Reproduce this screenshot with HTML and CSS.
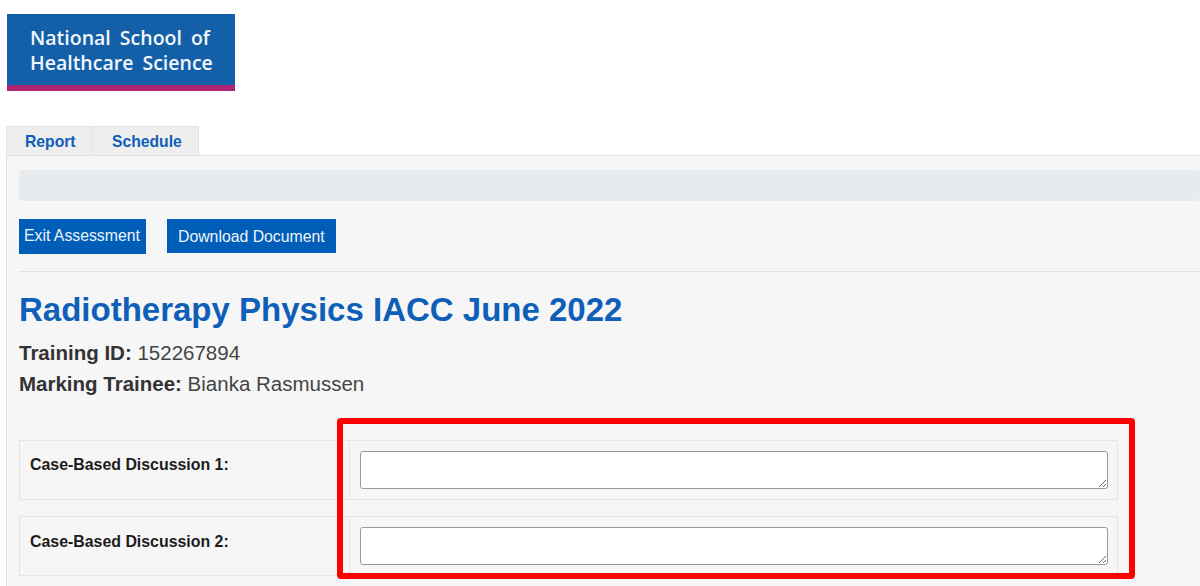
FILE: index.html
```html
<!DOCTYPE html>
<html lang="en">
<head>
<meta charset="utf-8">
<title>Radiotherapy Physics IACC June 2022</title>
<link rel="stylesheet" href="styles.css">
</head>
<body>
<header class="masthead">
  <div class="logo">National School of<br>Healthcare Science</div>
</header>
<nav class="tabs">
  <a class="tab">Report</a>
  <a class="tab tab-second">Schedule</a>
</nav>
<main class="panel">
  <div class="notice"></div>
  <div class="actions">
    <a class="btn btn-exit">Exit Assessment</a>
    <a class="btn btn-download">Download Document</a>
  </div>
  <hr class="rule">
  <h1 class="title">Radiotherapy Physics IACC June 2022</h1>
  <p class="meta"><b>Training ID:</b> 152267894</p>
  <p class="meta"><b>Marking Trainee:</b> Bianka Rasmussen</p>
  <section class="rows">
    <div class="row">
      <div class="row-label">Case-Based Discussion 1:</div>
      <div class="row-field"><textarea class="answer"></textarea></div>
    </div>
    <div class="row">
      <div class="row-label">Case-Based Discussion 2:</div>
      <div class="row-field"><textarea class="answer"></textarea></div>
    </div>
  </section>
</main>
<div class="highlight"></div>
</body>
</html>
```
FILE: styles.css
```css
html, body { margin: 0; padding: 0; height: 586px; overflow: hidden; background: #fff; }
body { font-family: "Liberation Sans", Arial, sans-serif; color: #333; position: relative; }

.masthead { padding: 14px 0 0 7px; height: 126px; box-sizing: border-box; }
.logo {
  width: 228px; height: 77px; box-sizing: border-box;
  background: #1460a8; border-bottom: 6px solid #ae2573;
  color: #f2f6fb; font-family: "Open Sans", sans-serif; font-weight: 600;
  font-size: 19.5px; word-spacing: 4px; line-height: 25px; padding: 11px 0 0 23px; white-space: nowrap;
}

.tabs { display: flex; margin-left: 6px; height: 29px; }
.tab {
  display: block; box-sizing: border-box; height: 29px; width: 87px; padding: 6px 0 0 18px;
  background: #eee; border: 1px solid #e2e2e2; border-bottom: 0;
  color: #0e5fb8; font-size: 15.7px; font-weight: bold;
}
.tab-second { border-left: 0; width: 106px; padding-left: 19px; }

.panel {
  margin-left: 6px; height: 431px; box-sizing: border-box;
  background: #f6f6f6; border-top: 1px solid #e2e2e2; border-left: 1px solid #e2e2e2;
  padding: 14px 0 0 12px;
}
.notice { height: 31px; background: #e8ebee; border-radius: 4px; }
.actions { display: flex; align-items: flex-start; gap: 21px; margin-top: 18px; }
.btn {
  display: block; box-sizing: border-box; background: #005eb8; color: #eef4fb;
  font-size: 15.8px; white-space: nowrap;
}
.btn-exit { width: 127px; height: 35px; padding: 8px 0 0 5px; }
.btn-download { width: 169px; height: 34px; padding: 9px 0 0 11px; }
.rule { border: 0; border-top: 1px solid #e2e2e2; margin: 17px 0 0; }
.title {
  margin: 18px 0 0 0; font-size: 33px; line-height: 40px; font-weight: bold; color: #0e5fb8;
}
.meta { margin: 0; font-size: 20.5px; line-height: 31px; color: #444; }
.meta b { color: #333; }
.title + .meta { margin-top: 7px; }

.rows { margin: 41px 82px 0 0; display: flex; flex-direction: column; gap: 16px; }
.row {
  display: flex; height: 60px; box-sizing: border-box; border: 1px solid #e6e6e6;
}
.row-label {
  width: 330px; flex: none; box-sizing: border-box; border-right: 1px solid #e6e6e6;
  padding: 14px 0 0 10px; font-size: 15.9px; font-weight: bold; color: #1c1c1c; line-height: 19px;
}
.row + .row .row-label { padding-top: 15px; }
.row-field { flex: 1; padding: 10px 9px 0 10px; }
.answer {
  display: block; width: 100%; height: 38px; box-sizing: border-box; margin: 0;
  border: 1px solid #999; border-radius: 3px; background: #fff; resize: vertical;
}

.highlight {
  position: absolute; left: 337px; top: 418px; width: 798px; height: 161px;
  box-sizing: border-box; border: 6px solid #ff0000; border-radius: 4px;
}
```
